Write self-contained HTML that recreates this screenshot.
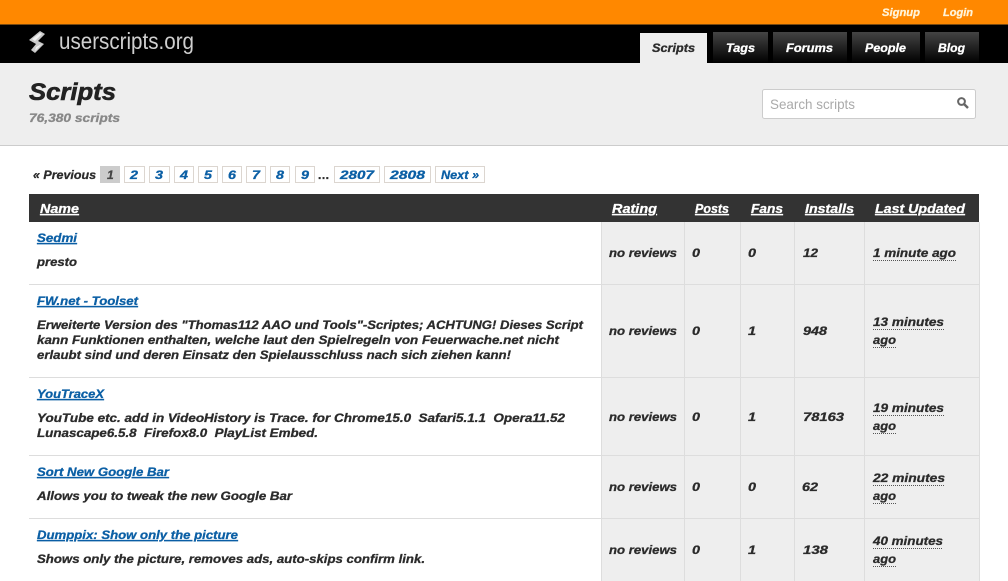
<!DOCTYPE html>
<html><head><meta charset="utf-8"><title>Scripts</title>
<style>
html,body{margin:0;padding:0;background:#fff;width:1008px;height:581px;overflow:hidden}
svg{display:block}
text{font-family:"Liberation Sans",sans-serif;font-weight:bold;font-style:italic;font-size:12px;fill:#2b2b2b;stroke:#2b2b2b;stroke-width:.3px;white-space:pre}
.l{fill:#0b5fa5;stroke:#0b5fa5;text-decoration:underline}
.h{fill:#fff;stroke:#fff;text-decoration:underline;font-size:12.5px}
.w{fill:#fff;stroke:#fff;font-size:12px}
.p{fill:#0b5fa5;stroke:#0b5fa5;font-size:12px}
.b{fill:none;stroke:#dcd6d0}
.d{stroke:#555;stroke-width:1;stroke-dasharray:1 1}
.s{stroke:#ddd;stroke-width:1}
</style></head><body>
<svg width="1008" height="581" viewBox="0 0 1008 581" xmlns="http://www.w3.org/2000/svg">
<defs><linearGradient id="g" x1="0" y1="0" x2="0" y2="1"><stop offset="0" stop-color="#444"/><stop offset="1" stop-color="#000"/></linearGradient></defs>
<rect width="1008" height="24" fill="#ff8800"/>
<rect y="24" width="1008" height="1" fill="#7a4a10"/>
<rect y="25" width="1008" height="38" fill="#000"/>
<rect y="63" width="1008" height="82" fill="#eee"/>
<rect y="145" width="1008" height="1" fill="#ccc"/>

<text class="w" x="882" y="16" textLength="38" lengthAdjust="spacingAndGlyphs" style="font-size:11px;fill:#fff3d8;stroke:#fff3d8">Signup</text>
<text class="w" x="943" y="16" textLength="30" lengthAdjust="spacingAndGlyphs" style="font-size:11px;fill:#fff3d8;stroke:#fff3d8">Login</text>

<path d="M29 40 L40 31 L45 34 L38 41 L44 44 L35 53 L31 50 L36 44 Z" fill="#c8c8c8"/>
<path d="M32 39 L40 33 L42 34 L35 41 Z" fill="#f0f0f0"/>
<path d="M36 47 L42 44 L35 51 Z" fill="#eee"/>
<text x="59" y="49" textLength="135" lengthAdjust="spacingAndGlyphs" style="font-size:23px;font-weight:normal;font-style:normal;fill:#cfcfcf;stroke:none">userscripts.org</text>

<rect x="640" y="33" width="67" height="30" fill="#eee"/>
<text x="652" y="52" textLength="43" lengthAdjust="spacingAndGlyphs">Scripts</text>
<rect x="713" y="32" width="55" height="31" fill="url(#g)"/>
<text class="w" x="726" y="52" textLength="29" lengthAdjust="spacingAndGlyphs">Tags</text>
<rect x="773" y="32" width="74" height="31" fill="url(#g)"/>
<text class="w" x="786" y="52" textLength="47" lengthAdjust="spacingAndGlyphs">Forums</text>
<rect x="852" y="32" width="68" height="31" fill="url(#g)"/>
<text class="w" x="865" y="52" textLength="41" lengthAdjust="spacingAndGlyphs">People</text>
<rect x="925" y="32" width="54" height="31" fill="url(#g)"/>
<text class="w" x="938" y="52" textLength="27" lengthAdjust="spacingAndGlyphs">Blog</text>

<text x="29" y="100" textLength="87" lengthAdjust="spacingAndGlyphs" style="font-size:24px;fill:#222;stroke:#222;stroke-width:.6px">Scripts</text>
<text x="29" y="122" textLength="91" lengthAdjust="spacingAndGlyphs" style="font-size:12px;fill:#888;stroke:#888">76,380 scripts</text>

<rect x="762.5" y="89.5" width="213" height="29" rx="2" fill="#fff" stroke="#ccc"/>
<text x="770" y="109" textLength="85" lengthAdjust="spacingAndGlyphs" style="font-size:14px;font-weight:normal;font-style:normal;fill:#aaa;stroke:none">Search scripts</text>
<circle cx="961.5" cy="101.5" r="3.4" fill="none" stroke="#666" stroke-width="2"/>
<path d="M964 104 L968 108" stroke="#666" stroke-width="2.4" fill="none"/>

<text x="33" y="179" textLength="63" lengthAdjust="spacingAndGlyphs">« Previous</text>
<rect x="100" y="166" width="20" height="17" fill="#ccc"/>
<text x="107" y="179" style="fill:#444;stroke:#444">1</text>
<rect class="b" x="124.500" y="166.500" width="20" height="16"/><text class="p" x="130" y="179" textLength="8" lengthAdjust="spacingAndGlyphs">2</text>
<rect class="b" x="149.500" y="166.500" width="20" height="16"/><text class="p" x="155" y="179" textLength="8" lengthAdjust="spacingAndGlyphs">3</text>
<rect class="b" x="174.500" y="166.500" width="19" height="16"/><text class="p" x="180" y="179" textLength="8" lengthAdjust="spacingAndGlyphs">4</text>
<rect class="b" x="198.500" y="166.500" width="19" height="16"/><text class="p" x="204" y="179" textLength="8" lengthAdjust="spacingAndGlyphs">5</text>
<rect class="b" x="222.500" y="166.500" width="19" height="16"/><text class="p" x="228" y="179" textLength="8" lengthAdjust="spacingAndGlyphs">6</text>
<rect class="b" x="246.500" y="166.500" width="19" height="16"/><text class="p" x="252" y="179" textLength="8" lengthAdjust="spacingAndGlyphs">7</text>
<rect class="b" x="270.500" y="166.500" width="19" height="16"/><text class="p" x="276" y="179" textLength="8" lengthAdjust="spacingAndGlyphs">8</text>
<rect class="b" x="295.500" y="166.500" width="19" height="16"/><text class="p" x="301" y="179" textLength="8" lengthAdjust="spacingAndGlyphs">9</text>
<text x="318" y="179" textLength="11" style="font-style:normal">...</text>
<rect class="b" x="334.500" y="166.500" width="45" height="16"/><text class="p" x="340" y="179" textLength="34" lengthAdjust="spacingAndGlyphs">2807</text>
<rect class="b" x="384.500" y="166.500" width="46" height="16"/><text class="p" x="390" y="179" textLength="35" lengthAdjust="spacingAndGlyphs">2808</text>
<rect class="b" x="435.500" y="166.500" width="49" height="16"/><text class="p" x="441" y="179" textLength="38" lengthAdjust="spacingAndGlyphs">Next »</text>

<rect x="602" y="222" width="377" height="359" fill="#eee"/>
<g class="s">
<line x1="601.500" y1="222" x2="601.500" y2="581"/>
<line x1="684.500" y1="222" x2="684.500" y2="581"/>
<line x1="740.500" y1="222" x2="740.500" y2="581"/>
<line x1="794.500" y1="222" x2="794.500" y2="581"/>
<line x1="864.500" y1="222" x2="864.500" y2="581"/>
<line x1="979.500" y1="222" x2="979.500" y2="581"/>
<line x1="29" y1="284.500" x2="979" y2="284.500"/>
<line x1="29" y1="377.500" x2="979" y2="377.500"/>
<line x1="29" y1="455.500" x2="979" y2="455.500"/>
<line x1="29" y1="518.500" x2="979" y2="518.500"/>
</g>

<rect x="29" y="194" width="950" height="28" fill="#333"/>
<text class="h" x="40" y="213" textLength="39" lengthAdjust="spacingAndGlyphs">Name</text>
<text class="h" x="612" y="213" textLength="45" lengthAdjust="spacingAndGlyphs">Rating</text>
<text class="h" x="695" y="213" textLength="34" lengthAdjust="spacingAndGlyphs">Posts</text>
<text class="h" x="751" y="213" textLength="32" lengthAdjust="spacingAndGlyphs">Fans</text>
<text class="h" x="805" y="213" textLength="49" lengthAdjust="spacingAndGlyphs">Installs</text>
<text class="h" x="875" y="213" textLength="90" lengthAdjust="spacingAndGlyphs">Last Updated</text>

<text class="l" x="37" y="242" textLength="40" lengthAdjust="spacingAndGlyphs">Sedmi</text>
<text x="37" y="266" textLength="40" lengthAdjust="spacingAndGlyphs">presto</text>

<text class="l" x="37" y="305" textLength="101" lengthAdjust="spacingAndGlyphs">FW.net - Toolset</text>
<text x="37" y="329" textLength="546" lengthAdjust="spacingAndGlyphs">Erweiterte Version des "Thomas112 AAO und Tools"-Scriptes; ACHTUNG! Dieses Script</text>
<text x="37" y="344" textLength="522" lengthAdjust="spacingAndGlyphs">kann Funktionen enthalten, welche laut den Spielregeln von Feuerwache.net nicht</text>
<text x="37" y="359" textLength="474" lengthAdjust="spacingAndGlyphs">erlaubt sind und deren Einsatz den Spielausschluss nach sich ziehen kann!</text>

<text class="l" x="37" y="398" textLength="67" lengthAdjust="spacingAndGlyphs">YouTraceX</text>
<text x="37" y="422" textLength="528" lengthAdjust="spacingAndGlyphs">YouTube etc. add in VideoHistory is Trace. for Chrome15.0  Safari5.1.1  Opera11.52</text>
<text x="37" y="437" textLength="281" lengthAdjust="spacingAndGlyphs">Lunascape6.5.8  Firefox8.0  PlayList Embed.</text>

<text class="l" x="37" y="476" textLength="132" lengthAdjust="spacingAndGlyphs">Sort New Google Bar</text>
<text x="37" y="500" textLength="255" lengthAdjust="spacingAndGlyphs">Allows you to tweak the new Google Bar</text>

<text class="l" x="37" y="539" textLength="201" lengthAdjust="spacingAndGlyphs">Dumppix: Show only the picture</text>
<text x="37" y="563" textLength="388" lengthAdjust="spacingAndGlyphs">Shows only the picture, removes ads, auto-skips confirm link.</text>

<g>
<text x="609" y="257" textLength="68" lengthAdjust="spacingAndGlyphs">no reviews</text>
<text x="692" y="257" textLength="8" lengthAdjust="spacingAndGlyphs">0</text>
<text x="748" y="257" textLength="8" lengthAdjust="spacingAndGlyphs">0</text>
<text x="803" y="257" textLength="15" lengthAdjust="spacingAndGlyphs">12</text>
<text x="873" y="257" textLength="83" lengthAdjust="spacingAndGlyphs">1 minute ago</text>
<line class="d" x1="873" y1="260.500" x2="956" y2="260.500"/>

<text x="609" y="335" textLength="68" lengthAdjust="spacingAndGlyphs">no reviews</text>
<text x="692" y="335" textLength="8" lengthAdjust="spacingAndGlyphs">0</text>
<text x="748" y="335" textLength="8" lengthAdjust="spacingAndGlyphs">1</text>
<text x="803" y="335" textLength="24" lengthAdjust="spacingAndGlyphs">948</text>
<text x="873" y="326" textLength="71" lengthAdjust="spacingAndGlyphs">13 minutes</text>
<line class="d" x1="873" y1="329.500" x2="944" y2="329.500"/>
<text x="873" y="344" textLength="23" lengthAdjust="spacingAndGlyphs">ago</text>
<line class="d" x1="873" y1="347.500" x2="896" y2="347.500"/>

<text x="609" y="421" textLength="68" lengthAdjust="spacingAndGlyphs">no reviews</text>
<text x="692" y="421" textLength="8" lengthAdjust="spacingAndGlyphs">0</text>
<text x="748" y="421" textLength="8" lengthAdjust="spacingAndGlyphs">1</text>
<text x="803" y="421" textLength="41" lengthAdjust="spacingAndGlyphs">78163</text>
<text x="873" y="412" textLength="71" lengthAdjust="spacingAndGlyphs">19 minutes</text>
<line class="d" x1="873" y1="415.500" x2="944" y2="415.500"/>
<text x="873" y="430" textLength="23" lengthAdjust="spacingAndGlyphs">ago</text>
<line class="d" x1="873" y1="433.500" x2="896" y2="433.500"/>

<text x="609" y="491" textLength="68" lengthAdjust="spacingAndGlyphs">no reviews</text>
<text x="692" y="491" textLength="8" lengthAdjust="spacingAndGlyphs">0</text>
<text x="748" y="491" textLength="8" lengthAdjust="spacingAndGlyphs">0</text>
<text x="802" y="491" textLength="16" lengthAdjust="spacingAndGlyphs">62</text>
<text x="873" y="482" textLength="72" lengthAdjust="spacingAndGlyphs">22 minutes</text>
<line class="d" x1="873" y1="485.500" x2="945" y2="485.500"/>
<text x="873" y="500" textLength="23" lengthAdjust="spacingAndGlyphs">ago</text>
<line class="d" x1="873" y1="503.500" x2="896" y2="503.500"/>

<text x="609" y="554" textLength="68" lengthAdjust="spacingAndGlyphs">no reviews</text>
<text x="692" y="554" textLength="8" lengthAdjust="spacingAndGlyphs">0</text>
<text x="748" y="554" textLength="8" lengthAdjust="spacingAndGlyphs">1</text>
<text x="803" y="554" textLength="25" lengthAdjust="spacingAndGlyphs">138</text>
<text x="873" y="545" textLength="70" lengthAdjust="spacingAndGlyphs">40 minutes</text>
<line class="d" x1="873" y1="548.500" x2="943" y2="548.500"/>
<text x="873" y="563" textLength="23" lengthAdjust="spacingAndGlyphs">ago</text>
<line class="d" x1="873" y1="566.500" x2="896" y2="566.500"/>
</g>
</svg>
</body></html>
